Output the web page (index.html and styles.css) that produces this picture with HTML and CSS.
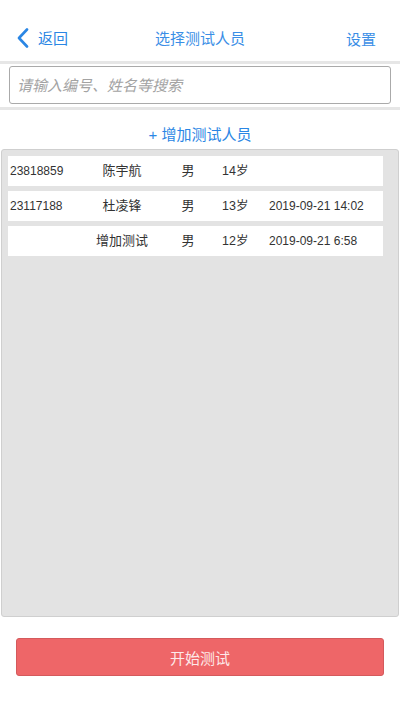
FILE: index.html
```html
<!DOCTYPE html>
<html lang="zh-CN">
<head>
<meta charset="utf-8">
<title>选择测试人员</title>
<link rel="stylesheet" href="styles.css">
</head>
<body>
<div class="page">
  <header class="nav">
    <div class="nav-left">
      <svg class="chev" width="14" height="20" viewBox="0 0 14 20"><path d="M11 1.5 L3 10 L11 18.5" fill="none" stroke="#2a86e4" stroke-width="2.6" stroke-linecap="round" stroke-linejoin="round"/></svg>
      <span class="nav-back">返回</span>
    </div>
    <div class="nav-title">选择测试人员</div>
    <div class="nav-right">设置</div>
  </header>
  <div class="search-bar">
    <input class="search-input" type="text" placeholder="请输入编号、姓名等搜索">
  </div>
  <div class="add-row">+ 增加测试人员</div>
  <section class="panel">
    <div class="row"><span class="c-id">23818859</span><span class="c-name">陈宇航</span><span class="c-sex">男</span><span class="c-age">14岁</span><span class="c-date"></span></div>
    <div class="row"><span class="c-id">23117188</span><span class="c-name">杜凌锋</span><span class="c-sex">男</span><span class="c-age">13岁</span><span class="c-date">2019-09-21 14:02</span></div>
    <div class="row"><span class="c-id"></span><span class="c-name">增加测试</span><span class="c-sex">男</span><span class="c-age">12岁</span><span class="c-date">2019-09-21 6:58</span></div>
  </section>
  <div class="footer">
    <button class="start-btn">开始测试</button>
  </div>
</div>
</body>
</html>
```
FILE: styles.css
```css
* { box-sizing: border-box; }
html, body { margin: 0; padding: 0; background: #fff; }
body {
  font-family: "Liberation Sans", "Noto Sans CJK SC", sans-serif;
  width: 400px;
  height: 711px;
  overflow: hidden;
}
.page { display: flex; flex-direction: column; height: 711px; }
.nav {
  display: flex;
  align-items: center;
  justify-content: space-between;
  padding: 14px 24px 0 16px;
  font-size: 15px;
  color: #2a86e4;
  border-bottom: 3px solid #e6e6e6;
  height: 64px;
}
.nav-left { display: flex; align-items: center; width: 88px; }
.chev { margin-right: 8px; }
.nav-back { color: #2a86e4; }
.nav-title { color: #3a8ee6; }
.nav-right { width: 80px; text-align: right; color: #3a8ee6; padding-top: 2px; }
.search-bar {
  padding: 2px 9px 3px;
  border-bottom: 3px solid #e6e6e6;
}
.search-input {
  display: block;
  width: 100%;
  height: 38px;
  border: 1px solid #aaa;
  border-radius: 3px;
  padding: 0 7px;
  font-size: 15px;
  font-family: "Liberation Sans", "Noto Sans CJK SC", sans-serif;
  outline: none;
  background: #fff;
}
.search-input::placeholder { color: #a3a3a3; font-style: italic; }
.add-row {
  height: 39px;
  display: flex;
  align-items: center;
  justify-content: center;
  padding-top: 7px;
  font-size: 15px;
  color: #2a86e4;
}
.panel {
  margin: 0 1px;
  height: 468px;
  background: #e3e3e3;
  border: 1px solid #cfcfcf;
  border-radius: 3px;
  padding: 6px 15px 0 6px;
  display: flex;
  flex-direction: column;
  gap: 5px;
}
.row {
  height: 30px;
  background: #fff;
  white-space: nowrap;
  line-height: 30px;
  padding-left: 2px;
  font-size: 12px;
  color: #333;
  overflow: hidden;
}
.row span { display: inline-block; vertical-align: baseline; line-height: 28px; }
.c-id { width: 72px; }
.c-name { width: 80px; text-align: center; font-size: 13px; }
.c-sex { width: 52px; text-align: center; font-size: 13px; }
.c-age { width: 55px; padding-left: 8px; font-size: 12.5px; }
.c-date { width: 110px; }
.footer { padding: 21px 16px 0; }
.start-btn {
  display: block;
  width: 100%;
  height: 38px;
  background: #ee6668;
  border: 1px solid #d45a5c;
  border-radius: 3px;
  color: #fde9e9;
  font-size: 15px;
  font-family: "Liberation Sans", "Noto Sans CJK SC", sans-serif;
}
```
